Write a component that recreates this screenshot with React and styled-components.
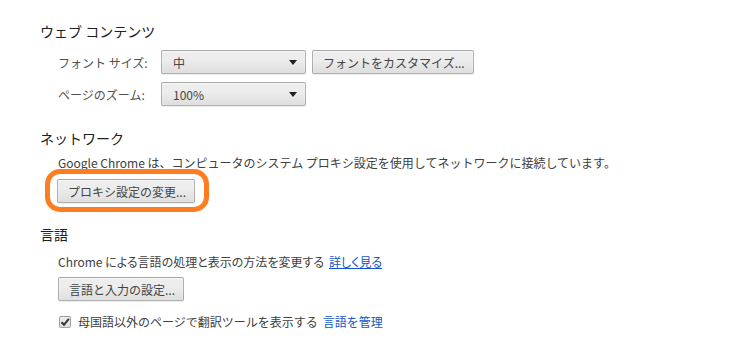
import React from "react";
import styled, { createGlobalStyle } from "styled-components";

const Global = createGlobalStyle`
  html, body { margin: 0; padding: 0; background: #fff; }
  body {
    font-family: "Noto Sans CJK JP", "Noto Sans", sans-serif;
    color: #303030;
    font-size: 12px;
  }
`;

const Page = styled.div`
  width: 743px;
  height: 360px;
  box-sizing: border-box;
  padding: 21px 0 0 40px;
  overflow: hidden;
`;

const Section = styled.section`
  display: flex;
  flex-direction: column;
  margin-top: ${(p) => p.$mt || 0}px;
`;

const Heading = styled.h3`
  margin: 0;
  font-size: 14px;
  line-height: 20px;
  font-weight: normal;
  color: #202020;
`;

const Indent = styled.div`
  display: flex;
  flex-direction: column;
  align-items: flex-start;
  padding-left: 18px;
  margin-top: ${(p) => p.$mt || 0}px;
`;

const Row = styled.div`
  display: flex;
  align-items: center;
  margin-top: ${(p) => p.$mt || 0}px;
`;

const Label = styled.span`
  width: 103px;
  font-size: 12px;
  color: #505050;
`;

const Text = styled.div`
  font-size: 12px;
  line-height: 16px;
  color: #404040;
  white-space: nowrap;
  font-feature-settings: ${(p) => (p.$palt ? '"palt"' : "normal")};
  margin-top: ${(p) => p.$mt || 0}px;
`;

const Link = styled.a`
  color: #1155cc;
  text-decoration: ${(p) => (p.$underline ? "underline" : "none")};
  margin-left: 5px;
  cursor: pointer;
`;

const controlBase = `
  box-sizing: border-box;
  height: 24px;
  border: 1px solid rgba(0, 0, 0, 0.25);
  border-radius: 2px;
  background: linear-gradient(#ededed, #ededed 38%, #dedede);
  box-shadow: 0 1px 0 rgba(0, 0, 0, 0.08), inset 0 1px 2px rgba(255, 255, 255, 0.75);
  font-family: "Noto Sans CJK JP", "Noto Sans", sans-serif;
  font-size: 12px;
  color: #444;
`;

const Select = styled.div`
  ${controlBase}
  width: 145px;
  display: flex;
  align-items: center;
  justify-content: space-between;
  padding: 0 8px 0 11px;
`;

const Arrow = styled.span`
  width: 0;
  height: 0;
  border-left: 4px solid transparent;
  border-right: 4px solid transparent;
  border-top: 5px solid #222;
`;

const Button = styled.button`
  ${controlBase}
  padding: 0 8px 0 10px;
  margin-left: ${(p) => p.$ml || 0}px;
  margin-top: ${(p) => p.$mt || 0}px;
  white-space: nowrap;
`;

const Annotated = styled.div`
  position: relative;
  margin-top: ${(p) => p.$mt || 0}px;
  margin-left: -1px;
`;

const Highlight = styled.div`
  position: absolute;
  left: -12px;
  top: -10px;
  right: -14px;
  bottom: -9px;
  border: 5px solid #ff7d21;
  border-radius: 15px;
  pointer-events: none;
`;

const CheckRow = styled.label`
  display: flex;
  align-items: center;
  margin-top: ${(p) => p.$mt || 0}px;
  margin-left: 1px;
  font-size: 12px;
  line-height: 16px;
  color: #404040;
  white-space: nowrap;
`;

const Box = styled.span`
  box-sizing: border-box;
  width: 12px;
  height: 12px;
  border: 1px solid rgba(0, 0, 0, 0.3);
  border-radius: 2px;
  background: linear-gradient(#ededed, #dedede);
  display: flex;
  align-items: center;
  justify-content: center;
  margin-right: 7px;
`;

export default function App() {
  return (
    <>
      <Global />
      <Page>
        <Section>
          <Heading>ウェブ コンテンツ</Heading>
          <Indent $mt={9}>
            <Row>
              <Label>フォント サイズ:</Label>
              <Select>
                <span>中</span>
                <Arrow />
              </Select>
              <Button $ml={6}>フォントをカスタマイズ...</Button>
            </Row>
            <Row $mt={8}>
              <Label>ページのズーム:</Label>
              <Select>
                <span>100%</span>
                <Arrow />
              </Select>
            </Row>
          </Indent>
        </Section>

        <Section $mt={22}>
          <Heading>ネットワーク</Heading>
          <Indent $mt={7}>
            <Text>
              Google Chrome は、コンピュータのシステム プロキシ設定を使用してネットワークに接続しています。
            </Text>
            <Annotated $mt={8}>
              <Button>プロキシ設定の変更...</Button>
              <Highlight />
            </Annotated>
          </Indent>
        </Section>

        <Section $mt={21}>
          <Heading>言語</Heading>
          <Indent $mt={10}>
            <Text $palt>
              Chrome による言語の処理と表示の方法を変更する
              <Link $underline>詳しく見る</Link>
            </Text>
            <Button $mt={7}>言語と入力の設定...</Button>
            <CheckRow $mt={13}>
              <Box>
                <svg width="10" height="10" viewBox="0 0 10 10">
                  <path d="M1.5 5.2 L4 7.8 L8.8 1.8" fill="none" stroke="#333" strokeWidth="2" />
                </svg>
              </Box>
              母国語以外のページで翻訳ツールを表示する
              <Link>言語を管理</Link>
            </CheckRow>
          </Indent>
        </Section>
      </Page>
    </>
  );
}
